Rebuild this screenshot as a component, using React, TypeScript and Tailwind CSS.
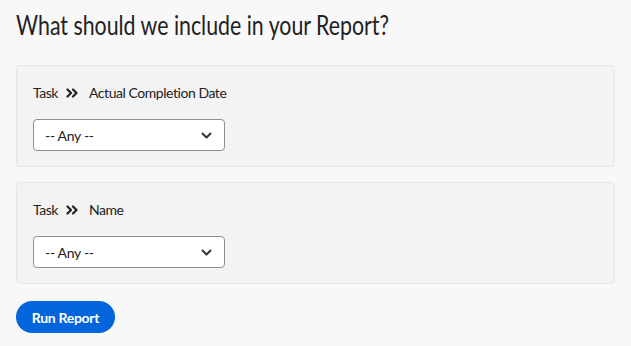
import React from "react";

const font = { fontFamily: "Lato, 'Noto Sans', sans-serif" };

function Chevrons() {
  return (
    <svg width="12" height="10" viewBox="0 0 12 10" fill="none" stroke="#222" strokeWidth="2.2" strokeLinecap="round" strokeLinejoin="round">
      <path d="M1.5 1.5 L5 5 L1.5 8.5" />
      <path d="M7 1.5 L10.5 5 L7 8.5" />
    </svg>
  );
}

function Select() {
  return (
    <div className="flex h-[32px] w-[192px] items-center justify-between rounded-[4px] border border-[#8f8f8f] bg-white pl-[11px] pr-[12px]">
      <span className="text-[14px] tracking-[-0.3px] text-[#222]">-- Any --</span>
      <svg width="11" height="7" viewBox="0 0 11 7" fill="none" stroke="#333" strokeWidth="2" strokeLinecap="round" strokeLinejoin="round">
        <path d="M1.5 1.5 L5.5 5.5 L9.5 1.5" />
      </svg>
    </div>
  );
}

function Panel({ field }: { field: string }) {
  return (
    <div className="rounded-[4px] border border-[#e6e6e6] bg-[#f3f3f3] px-[16px] pt-[17px] pb-[15px]">
      <div className="flex h-[19px] items-center text-[14px] tracking-[-0.45px] text-[#222]">
        <span>Task</span>
        <span className="ml-[8px] mr-[11px] flex items-center">
          <Chevrons />
        </span>
        <span>{field}</span>
      </div>
      <div className="mt-[17px]">
        <Select />
      </div>
    </div>
  );
}

export default function App() {
  return (
    <div className="min-h-[346px] w-full bg-[#f8f8f8] px-[16px] pt-[7px]" style={font}>
      <h1 className="origin-left scale-x-[0.79] whitespace-nowrap text-[27px] leading-[36px] text-[#222]">
        What should we include in your Report?
      </h1>
      <div className="mt-[22px] flex flex-col gap-[15px]">
        <Panel field="Actual Completion Date" />
        <Panel field="Name" />
      </div>
      <button className="mt-[17px] h-[32px] w-[99px] rounded-full bg-[#0265dc] text-[14px] font-bold tracking-[-0.3px] text-white">
        Run Report
      </button>
    </div>
  );
}
